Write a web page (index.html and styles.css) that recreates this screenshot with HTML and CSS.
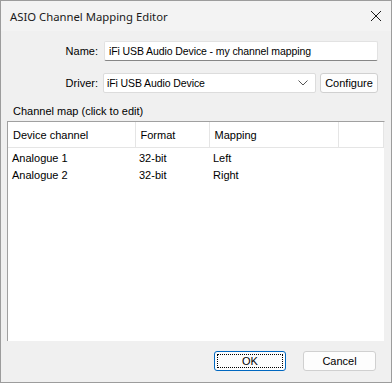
FILE: index.html
```html
<!DOCTYPE html>
<html lang="en">
<head>
    <meta charset="UTF-8">
    <title>ASIO Channel Mapping Editor</title>
    <link rel="stylesheet" href="styles.css">
</head>
<body>
    <div class="window">
        <div class="titlebar">
            <span class="title">ASIO Channel Mapping Editor</span>
            <svg class="closeIcon" width="12" height="12" viewBox="0 0 12 12">
                <path d="M1 1 L11 11 M11 1 L1 11" stroke="#1a1a1a" stroke-width="1" fill="none"/>
            </svg>
        </div>
        <div class="content">
            <div class="formRow nameRow">
                <label class="fieldLabel">Name:</label>
                <div class="textBox">iFi USB Audio Device - my channel mapping</div>
            </div>
            <div class="formRow driverRow">
                <label class="fieldLabel">Driver:</label>
                <div class="comboBox">
                    <span>iFi USB Audio Device</span>
                    <svg class="chevron" width="10" height="6" viewBox="0 0 10 6">
                        <path d="M0.5 0.5 L5 5 L9.5 0.5" stroke="#555" stroke-width="1" fill="none"/>
                    </svg>
                </div>
                <button class="btn configureBtn">Configure</button>
            </div>
            <div class="mapLabel">Channel map (click to edit)</div>
            <div class="listView">
                <table class="channelTable">
                    <colgroup>
                        <col class="colDevice">
                        <col class="colFormat">
                        <col class="colMapping">
                        <col>
                    </colgroup>
                    <thead>
                        <tr>
                            <th>Device channel</th>
                            <th>Format</th>
                            <th>Mapping</th>
                            <th></th>
                        </tr>
                    </thead>
                    <tbody>
                        <tr class="firstRow"><td>Analogue 1</td><td>32-bit</td><td>Left</td><td></td></tr>
                        <tr><td>Analogue 2</td><td>32-bit</td><td>Right</td><td></td></tr>
                    </tbody>
                </table>
            </div>
            <div class="buttonRow">
                <button class="btn okBtn"><span class="focusRect">OK</span></button>
                <button class="btn cancelBtn">Cancel</button>
            </div>
        </div>
    </div>
</body>
</html>
```

FILE: styles.css
```css
body {
    margin: 0;
    padding: 0;
    font-family: "Liberation Sans", Arial, sans-serif;
    font-size: 11px;
    color: #000;
}
.window {
    width: 392px;
    height: 383px;
    box-sizing: border-box;
    border: 1px solid #9c9c9c;
    background: #f0f0f0;
    display: flex;
    flex-direction: column;
}
.titlebar {
    height: 30px;
    background: #f3f3f3;
    display: flex;
    align-items: center;
    justify-content: space-between;
    padding: 0 9px 0 9px;
}
.title {
    font-family: "Noto Sans", sans-serif;
    font-size: 11.3px;
    color: #1a1a1a;
}
.content {
    flex: 1;
    display: flex;
    flex-direction: column;
    padding: 10px 6px 0 6px;
}
.formRow {
    display: flex;
    align-items: center;
    height: 20px;
}
.driverRow {
    margin-top: 12px;
}
.fieldLabel {
    width: 91px;
    text-align: right;
    margin-right: 6px;
}
.textBox, .comboBox {
    font-size: 10.5px;
    letter-spacing: -0.1px;
}
.textBox {
    width: 274px;
    height: 20px;
    box-sizing: border-box;
    background: #fff;
    border: 1px solid #e2e2e2;
    border-bottom-color: #868686;
    border-radius: 2px;
    padding: 0 4px;
    line-height: 18px;
}
.comboBox {
    width: 213px;
    height: 20px;
    box-sizing: border-box;
    margin-left: -1px;
    background: #fff;
    border: 1px solid #dcdcdc;
    border-radius: 2px;
    padding: 0 4px 0 3px;
    display: flex;
    align-items: center;
    justify-content: space-between;
}
.chevron {
    margin-right: 3px;
}
.btn {
    font-family: inherit;
    font-size: 11px;
    color: #000;
    background: #fdfdfd;
    border: 1px solid #d0d0d0;
    border-radius: 3px;
    height: 20px;
    padding: 0;
    box-sizing: border-box;
}
.configureBtn {
    width: 58px;
    margin-left: 4px;
}
.mapLabel {
    margin-top: 11px;
    padding-left: 6px;
    height: 17px;
    line-height: 15px;
}
.listView {
    height: 220px;
    box-sizing: border-box;
    background: #fff;
    border-top: 1px solid #a0a0a0;
    border-left: 1px solid #a0a0a0;
    border-right: 1px solid #f0f0f0;
}
.channelTable {
    border-collapse: collapse;
    table-layout: fixed;
    width: 376px;
}
.colDevice { width: 127px; }
.colFormat { width: 74px; }
.colMapping { width: 129px; }
.channelTable th {
    font-weight: normal;
    text-align: left;
    height: 25px;
    padding: 0 0 0 5px;
    border-right: 1px solid #e5e5e5;
    border-bottom: 1px solid #e5e5e5;
}
.channelTable td {
    height: 17px;
    padding: 0 0 0 4px;
    white-space: nowrap;
}
.firstRow td {
    padding-top: 1px;
}
.buttonRow {
    display: flex;
    justify-content: flex-end;
    gap: 17px;
    margin-top: 10px;
    padding-right: 9px;
}
.okBtn {
    width: 72px;
    border: 1px solid #0067c0;
    padding: 2px;
}
.focusRect {
    display: block;
    height: 100%;
    box-sizing: border-box;
    border: 1px dotted #000;
    line-height: 12px;
}
.cancelBtn {
    width: 73px;
}
```
